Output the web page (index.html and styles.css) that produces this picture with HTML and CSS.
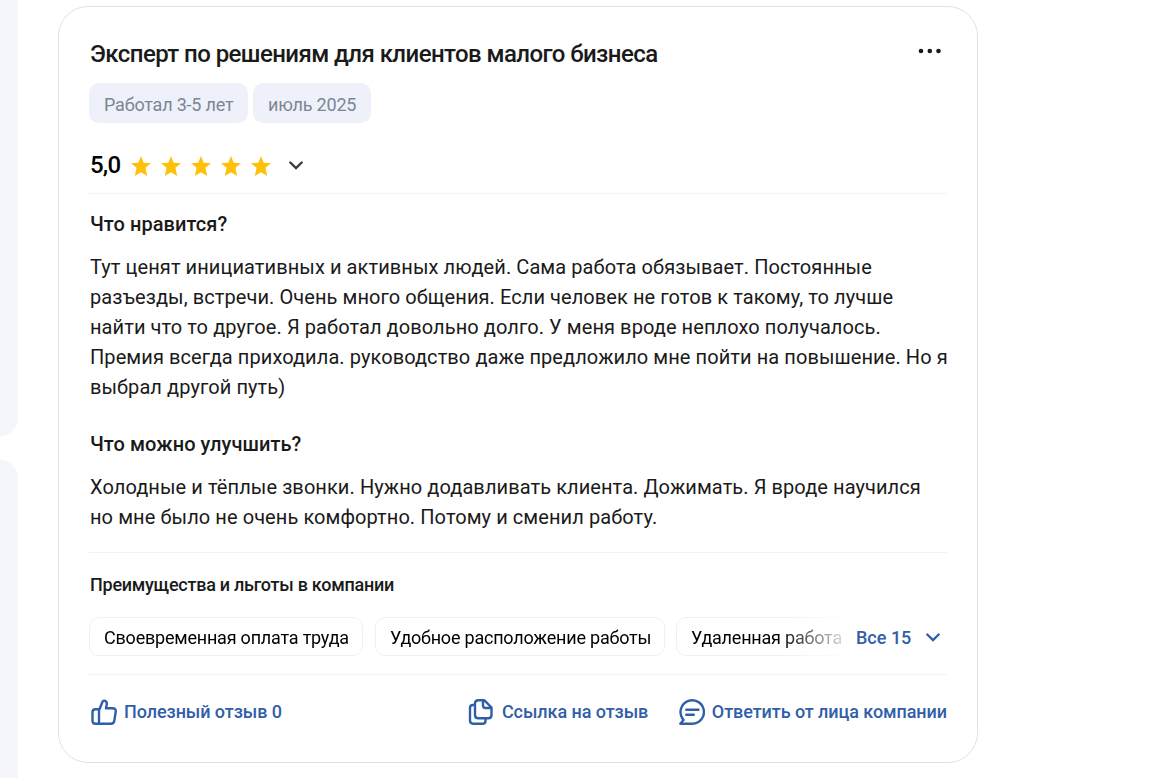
FILE: index.html
```html
<!DOCTYPE html>
<html lang="ru">
  <head>
    <meta charset="utf-8" />
    <title>Отзыв</title>
    <link rel="stylesheet" href="styles.css">
  </head>
  <body>
    <div class="page">
      <div class="sidebar">
        <div class="side_block side_first"></div>
        <div class="side_block side_second"></div>
      </div>
      <div class="card">
        <div class="card_head">
          <h2 class="title">Эксперт по решениям для клиентов малого бизнеса</h2>
          <svg class="dots" width="24" height="6" viewBox="0 0 24 6" fill="#1a1a1a">
            <circle cx="3" cy="3" r="2.3" />
            <circle cx="11.8" cy="3" r="2.3" />
            <circle cx="20.5" cy="3" r="2.3" />
          </svg>
        </div>
        <div class="tags">
          <span class="tag tag_period">Работал 3-5 лет</span>
          <span class="tag tag_date">июль 2025</span>
        </div>
        <div class="rating">
          <span class="score">5,0</span>
          <div class="stars">
            <svg viewBox="0 0 20 20"><path d="M10 0l2.700 6.700 7.300.5-5.600 4.600 1.800 8.200-6.200-3.700-6.200 3.700 1.800-8.200L0 7.200l7.300-.5z" /></svg>
            <svg viewBox="0 0 20 20"><path d="M10 0l2.700 6.700 7.300.5-5.600 4.600 1.800 8.200-6.200-3.700-6.200 3.700 1.800-8.200L0 7.200l7.300-.5z" /></svg>
            <svg viewBox="0 0 20 20"><path d="M10 0l2.700 6.700 7.300.5-5.600 4.600 1.800 8.200-6.200-3.700-6.200 3.700 1.800-8.200L0 7.200l7.300-.5z" /></svg>
            <svg viewBox="0 0 20 20"><path d="M10 0l2.700 6.700 7.300.5-5.600 4.600 1.800 8.200-6.200-3.700-6.200 3.700 1.800-8.200L0 7.200l7.300-.5z" /></svg>
            <svg viewBox="0 0 20 20"><path d="M10 0l2.700 6.700 7.300.5-5.600 4.600 1.800 8.200-6.200-3.700-6.200 3.700 1.800-8.200L0 7.200l7.300-.5z" /></svg>
          </div>
          <svg class="chevron" viewBox="0 0 14 9"><path d="M1.300 1.500L7 7l5.700-5.500" /></svg>
        </div>
        <div class="review">
          <h3 class="question">Что нравится?</h3>
          <p class="answer">
            Тут ценят инициативных и активных людей. Сама работа обязывает. Постоянные<br>
            разъезды, встречи. Очень много общения. Если человек не готов к такому, то лучше<br>
            найти что то другое. Я работал довольно долго. У меня вроде неплохо получалось.<br>
            Премия всегда приходила. руководство даже предложило мне пойти на повышение. Но я<br>
            выбрал другой путь)
          </p>
          <h3 class="question">Что можно улучшить?</h3>
          <p class="answer">
            Холодные и тёплые звонки. Нужно додавливать клиента. Дожимать. Я вроде научился<br>
            но мне было не очень комфортно. Потому и сменил работу.
          </p>
        </div>
        <div class="benefits">
          <h4 class="benefits_title">Преимущества и льготы в компании</h4>
          <div class="benefits_row">
            <div class="benefits_list">
              <span class="benefit benefit_pay">Своевременная оплата труда</span>
              <span class="benefit benefit_place">Удобное расположение работы</span>
              <span class="benefit benefit_remote">Удаленная работа</span>
            </div>
            <a class="more">Все 15 <svg class="chevron" viewBox="0 0 14 9"><path d="M1.300 1.500L7 7l5.700-5.500" /></svg></a>
          </div>
        </div>
        <div class="actions">
          <a class="action action_like">
            <svg viewBox="0 0 26 26">
              <path d="M8 11.500L11.300 3.200Q12.200 1 14.200 1.900Q16.300 3 15.700 5.500L15 9.300H21.500Q25.300 9.300 24.700 13L23.300 21.800Q22.800 24.700 20 24.700H4.500Q1.500 24.700 1.500 21.700V13Q1.500 10.300 4.500 10.300H8.400M8 11V24.500" />
            </svg>
            Полезный отзыв 0
          </a>
          <a class="action action_link">
            <svg viewBox="0 0 26 26">
              <path d="M10 1.200H16.200L23.500 8.500V16Q23.500 19.300 20.200 19.300H10.300Q7 19.300 7 16V4.500Q7 1.200 10.300 1.200M15 1.500V6.500Q15 9 17.500 9H23M7 6H5.200Q2 6 2 9V21.500Q2 24.700 5.200 24.700H14.500Q17.500 24.700 17.500 22V19.500" />
            </svg>
            Ссылка на отзыв
          </a>
          <a class="action action_reply">
            <svg viewBox="0 0 26 26">
              <path d="M1.300 24.700H13.500A11.700 11.700 0 1 0 3.500 19.500L4.500 21ZM7.300 10.800H19.500M7.300 15.800H14.800" />
            </svg>
            Ответить от лица компании
          </a>
        </div>
      </div>
    </div>
  </body>
</html>
```

FILE: styles.css
```css
* {
  box-sizing: border-box;
}
body {
  margin: 0;
  height: 778px;
  overflow: hidden;
  background-color: #fff;
  color: #1a1a1a;
  font-family: Roboto, sans-serif;
}
h2, h3, h4, p {
  margin: 0;
  font-weight: 500;
}
svg {
  display: block;
  flex: none;
}
.page {
  display: flex;
  align-items: flex-start;
  height: 778px;
}

.sidebar {
  width: 18px;
  margin-right: 40px;
}
.side_block {
  background-color: #f4f6fc;
}
.side_first {
  height: 436px;
  border-radius: 0 0 24px 0;
  margin-bottom: 24px;
}
.side_second {
  height: 318px;
  border-radius: 0 24px 0 0;
}

.card {
  width: 920px;
  height: 757px;
  margin-top: 6px;
  padding: 31px 30px 0;
  border: 1px solid #dce2ec;
  border-radius: 30px;
  white-space: nowrap;
}
.card_head {
  display: flex;
  justify-content: space-between;
  height: 45px;
}
.title {
  font-size: 24px;
  line-height: 32px;
  letter-spacing: -0.57px;
  padding-left: 1px;
}
.dots {
  margin: 10px 5px 0 0;
}
.tags {
  display: flex;
  gap: 5px;
}
.tag {
  height: 40px;
  padding-left: 15px;
  border-radius: 10px;
  background-color: #eef1f9;
  color: #7c8594;
  font-size: 18px;
  line-height: 43px;
  letter-spacing: -0.2px;
}
.tag_period {
  width: 159px;
}
.tag_date {
  width: 118px;
}
.rating {
  display: flex;
  align-items: center;
  height: 71px;
  padding: 14px 0 0 1px;
  border-bottom: 1px solid #f1f3f7;
}
.score {
  width: 41px;
  color: #000;
  font-size: 24px;
  font-weight: 500;
  line-height: 30px;
  letter-spacing: -0.8px;
}
.stars {
  display: flex;
  gap: 10px;
  margin-right: 18px;
  padding-top: 2px;
}
.stars svg {
  width: 20px;
  height: 20px;
  fill: #ffc107;
}
.chevron {
  width: 14px;
  height: 9px;
  fill: none;
  stroke: #3c3c3c;
  stroke-width: 2.4;
  stroke-linecap: round;
}

.review {
  height: 359px;
  padding: 15px 0 0 1px;
  border-bottom: 1px solid #f1f3f7;
}
.question {
  font-size: 20px;
  line-height: 30px;
  letter-spacing: 0.07px;
  margin-bottom: 13px;
}
.answer {
  font-size: 20px;
  font-weight: 400;
  line-height: 30px;
  letter-spacing: 0.08px;
  margin-bottom: 27px;
}

.benefits {
  height: 122px;
  padding-top: 20px;
  border-bottom: 1px solid #f1f3f7;
}
.benefits_title {
  font-size: 18px;
  line-height: 24px;
  letter-spacing: -0.26px;
  padding-left: 1px;
  margin-bottom: 20px;
}
.benefits_row {
  display: flex;
  align-items: center;
}
.benefits_list {
  display: flex;
  gap: 12px;
  width: 754px;
  overflow: hidden;
  -webkit-mask-image: linear-gradient(to right, #000 690px, transparent 765px);
  mask-image: linear-gradient(to right, #000 690px, transparent 765px);
}
.benefit {
  flex: none;
  height: 39px;
  padding-left: 14px;
  border: 1px solid #eef0f8;
  border-radius: 10px;
  color: #000;
  font-size: 18px;
  line-height: 39px;
  letter-spacing: -0.21px;
}
.benefit_pay {
  width: 274px;
}
.benefit_place {
  width: 290px;
}
.benefit_remote {
  width: 180px;
  margin-left: -1px;
}
.more {
  display: flex;
  align-items: center;
  gap: 15px;
  margin-left: 13px;
  padding-top: 2px;
  color: #315ea8;
  font-size: 18px;
  font-weight: 500;
}
.more .chevron {
  stroke: #315ea8;
}

.actions {
  display: flex;
  height: 73px;
  align-items: center;
}
.action {
  display: flex;
  align-items: center;
  gap: 7px;
  color: #315ea8;
  font-size: 18px;
  font-weight: 500;
  letter-spacing: -0.07px;
}
.action svg {
  width: 26px;
  height: 26px;
  fill: none;
  stroke: #315ea8;
  stroke-width: 2.4;
  stroke-linejoin: round;
  stroke-linecap: round;
}
.action_like {
  width: 378px;
  padding-left: 2px;
}
.action_link {
  width: 212px;
  padding-left: 1px;
  gap: 8px;
}
```
